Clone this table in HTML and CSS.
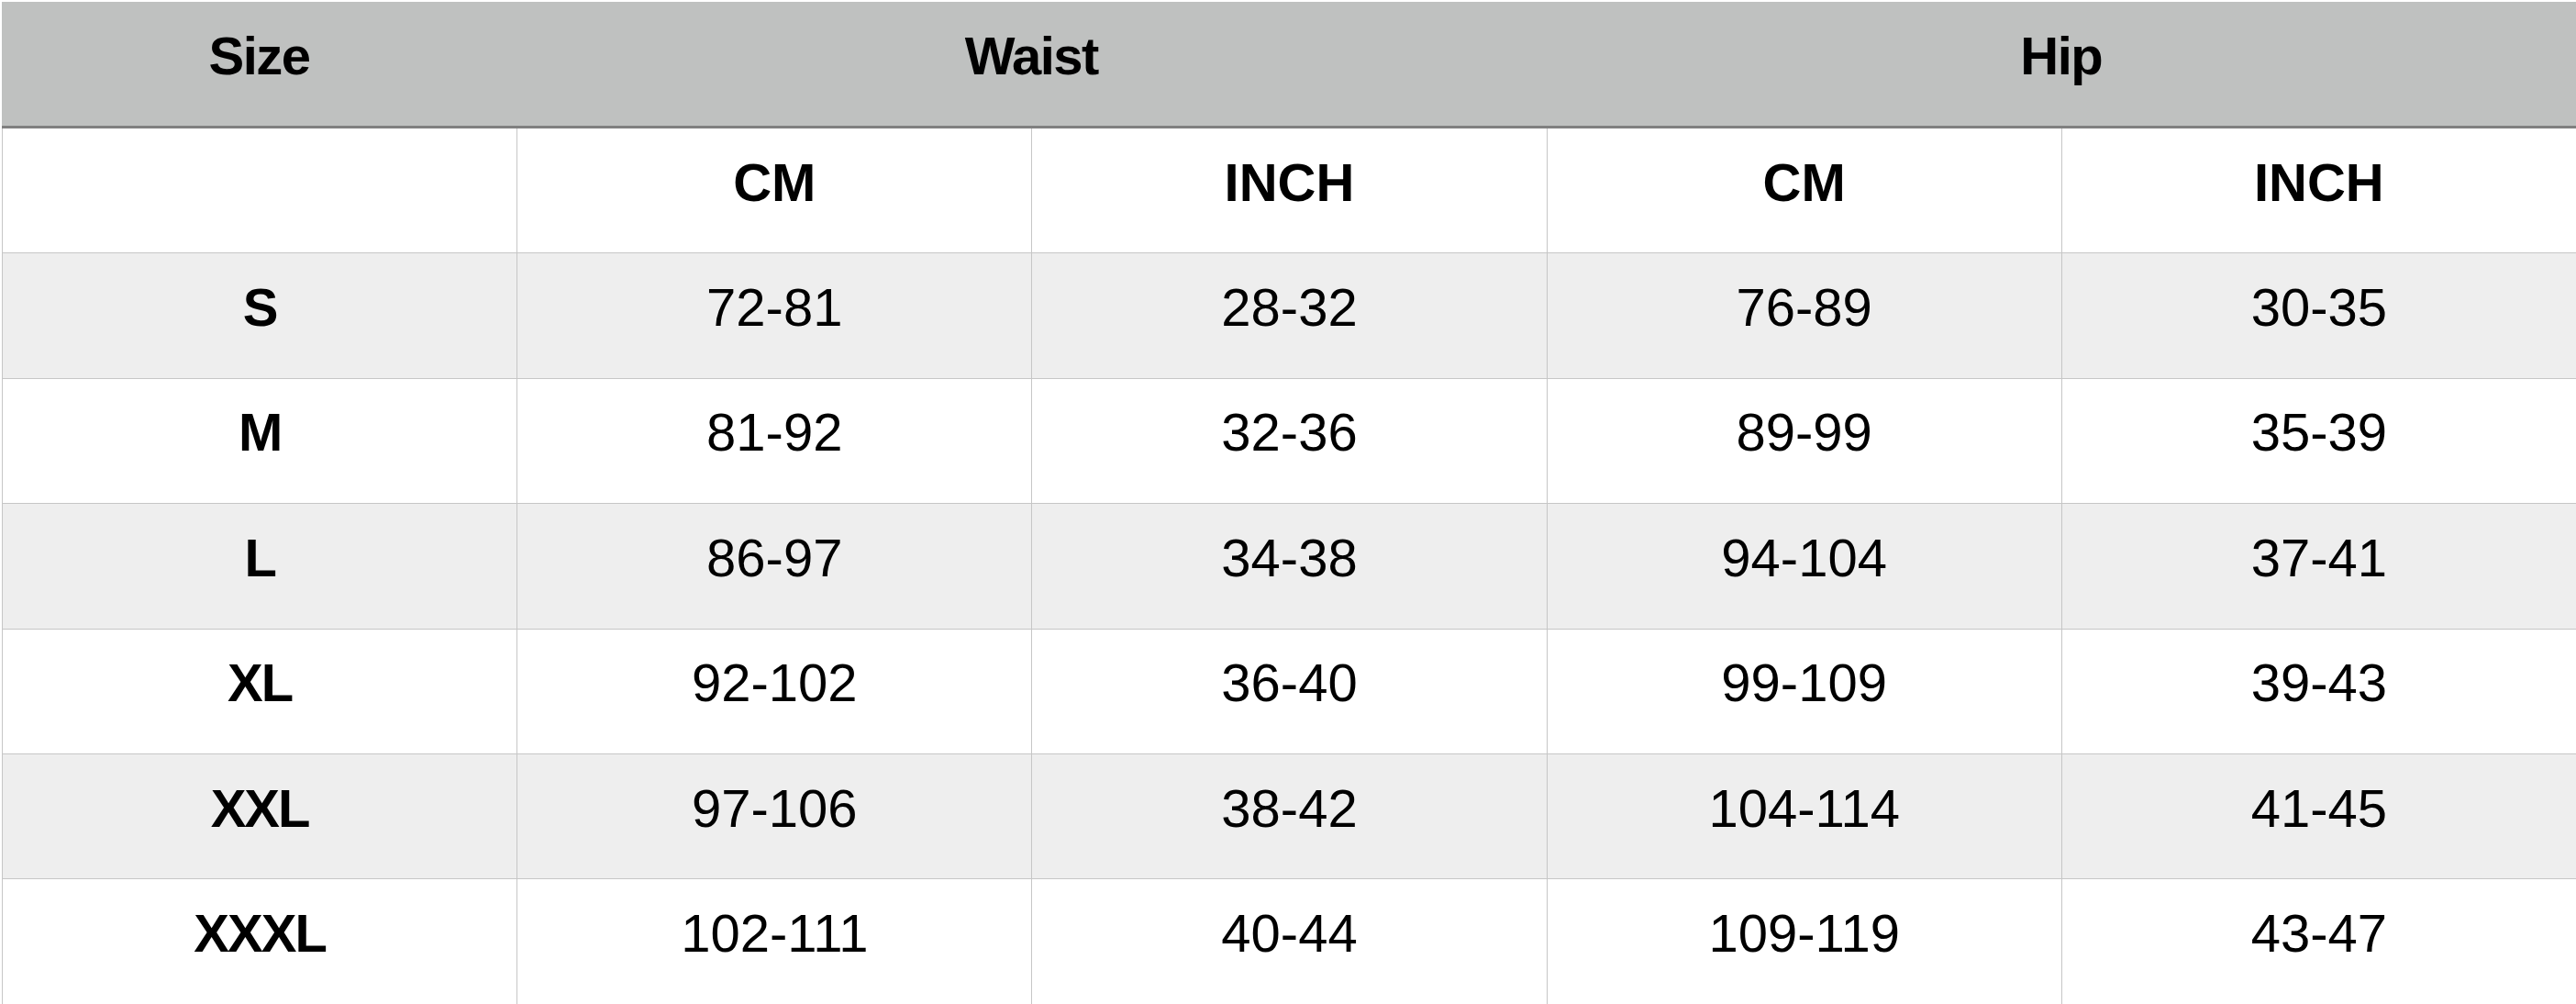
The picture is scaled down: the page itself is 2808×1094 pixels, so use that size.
FILE: index.html
```html
<!DOCTYPE html>
<html lang="en">
<head>
<meta charset="utf-8">
<title>Size Chart</title>
<link rel="stylesheet" href="styles.css">
</head>
<body>
<div class="chart">
  <div class="head">
    <div class="hcell">Size</div>
    <div class="hcell span2">Waist</div>
    <div class="hcell span2">Hip</div>
  </div>
  <div class="body">
    <div class="cell"></div>
    <div class="cell b">CM</div>
    <div class="cell b">INCH</div>
    <div class="cell b">CM</div>
    <div class="cell b">INCH</div>

    <div class="cell b lbl alt">S</div>
    <div class="cell alt">72-81</div>
    <div class="cell alt">28-32</div>
    <div class="cell alt">76-89</div>
    <div class="cell alt">30-35</div>

    <div class="cell b lbl">M</div>
    <div class="cell">81-92</div>
    <div class="cell">32-36</div>
    <div class="cell">89-99</div>
    <div class="cell">35-39</div>

    <div class="cell b lbl alt">L</div>
    <div class="cell alt">86-97</div>
    <div class="cell alt">34-38</div>
    <div class="cell alt">94-104</div>
    <div class="cell alt">37-41</div>

    <div class="cell b lbl">XL</div>
    <div class="cell">92-102</div>
    <div class="cell">36-40</div>
    <div class="cell">99-109</div>
    <div class="cell">39-43</div>

    <div class="cell b lbl alt">XXL</div>
    <div class="cell alt">97-106</div>
    <div class="cell alt">38-42</div>
    <div class="cell alt">104-114</div>
    <div class="cell alt">41-45</div>

    <div class="cell b lbl">XXXL</div>
    <div class="cell">102-111</div>
    <div class="cell">40-44</div>
    <div class="cell">109-119</div>
    <div class="cell">43-47</div>
  </div>
</div>
</body>
</html>
```

FILE: styles.css
```css
html, body {
  margin: 0;
  padding: 0;
  background: #ffffff;
}
body {
  font-family: "Liberation Sans", Arial, sans-serif;
  color: #000000;
  overflow: hidden;
}
.chart {
  padding: 2px 0 0 2px;
  width: 2806px;
}
.head {
  display: grid;
  grid-template-columns: repeat(5, 561.2px);
  height: 135px;
  background: #bfc1c0;
  border-bottom: 3px solid #808080;
}
.hcell {
  display: flex;
  align-items: center;
  justify-content: center;
  font-size: 58px;
  font-weight: bold;
  letter-spacing: -1.5px;
  padding-bottom: 19px;
  box-sizing: border-box;
}
.span2 {
  grid-column: span 2;
}
.body {
  display: grid;
  grid-template-columns: repeat(5, 561.2px);
  grid-auto-rows: 136.4px;
}
.cell {
  display: flex;
  align-items: center;
  justify-content: center;
  font-size: 58px;
  border-left: 1px solid #c6c6c6;
  border-bottom: 1px solid #c6c6c6;
  padding-bottom: 19px;
  box-sizing: border-box;
  background: #ffffff;
}
.cell.alt {
  background: #eeeeee;
}
.cell.b {
  font-weight: bold;
}
.cell.lbl {
  letter-spacing: -2px;
}
```
